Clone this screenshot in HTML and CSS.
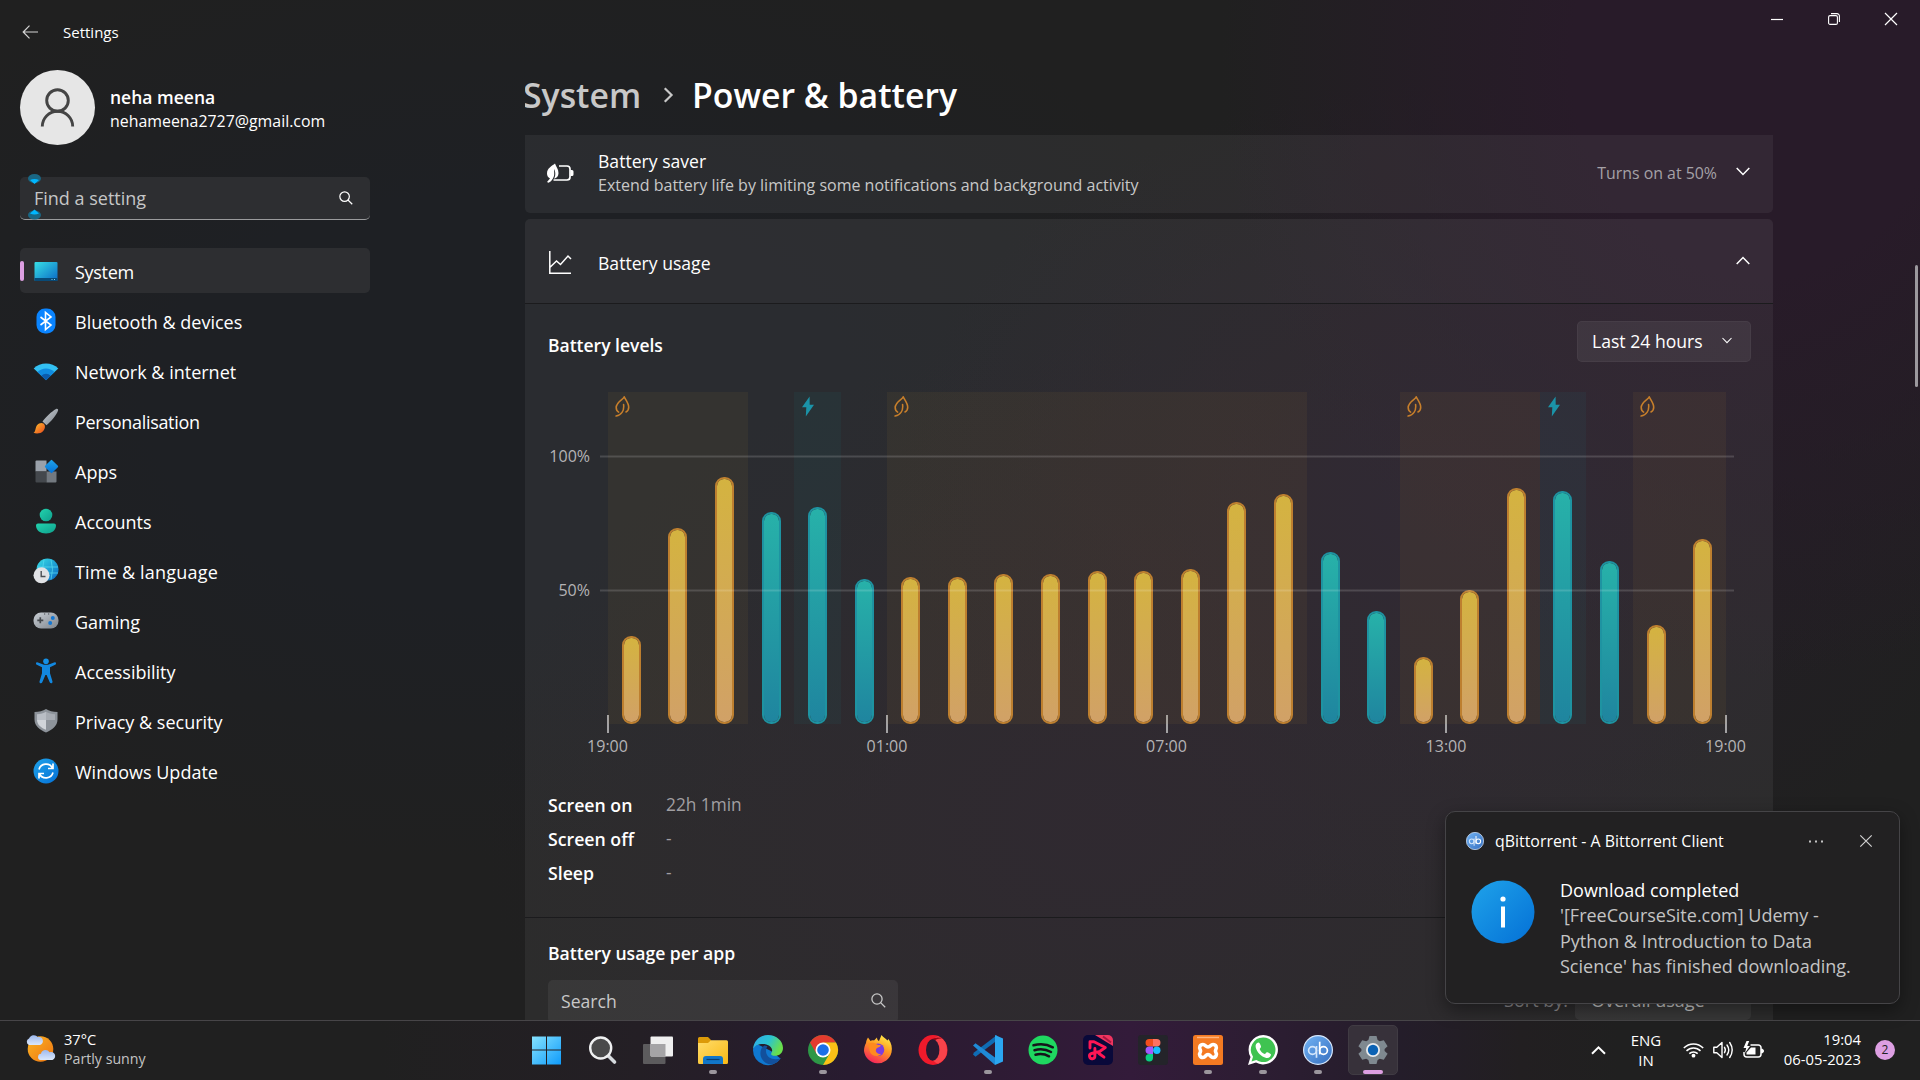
FILE: index.html
```html
<!DOCTYPE html>
<html lang="en">
<head>
<meta charset="utf-8">
<title>Settings</title>
<link rel="stylesheet" href="styles.css">
</head>
<body>
<svg class="defs" width="0" height="0" aria-hidden="true">
  <defs>
    <linearGradient id="gBlue" x1="0" y1="0" x2="1" y2="1"><stop offset="0" stop-color="#1fa3ea"/><stop offset="1" stop-color="#0470d6"/></linearGradient>
    <linearGradient id="gScreen" x1="0" y1="0" x2="1" y2="1"><stop offset="0" stop-color="#37dfe6"/><stop offset="1" stop-color="#0a68c4"/></linearGradient>
    <linearGradient id="gGreen" x1="0" y1="0" x2="1" y2="1"><stop offset="0" stop-color="#22d3ae"/><stop offset="1" stop-color="#0f9f8c"/></linearGradient>
    <linearGradient id="gGrey" x1="0" y1="0" x2="1" y2="1"><stop offset="0" stop-color="#c9ced4"/><stop offset="1" stop-color="#7d848c"/></linearGradient>
    <linearGradient id="gFire" x1="0" y1="0" x2="1" y2="1"><stop offset="0" stop-color="#ffc22e"/><stop offset="1" stop-color="#e8471d"/></linearGradient>
    <linearGradient id="gFox" x1=".8" y1="0" x2=".3" y2="1"><stop offset="0" stop-color="#fff04a"/><stop offset=".45" stop-color="#ff9a22"/><stop offset="1" stop-color="#f5215c"/></linearGradient>
    <linearGradient id="gFolder" x1="0" y1="0" x2="1" y2="1"><stop offset="0" stop-color="#ffdc6a"/><stop offset="1" stop-color="#f9b915"/></linearGradient>
    <linearGradient id="gWin" x1="0" y1="0" x2="1" y2="1"><stop offset="0" stop-color="#86e3ff"/><stop offset="1" stop-color="#0f9bfa"/></linearGradient>
    <linearGradient id="gEdge" x1="0" y1="0" x2="1" y2=".4"><stop offset="0" stop-color="#2fa9e8"/><stop offset=".55" stop-color="#2bc3d2"/><stop offset="1" stop-color="#69e04b"/></linearGradient>
    <linearGradient id="gSun" x1="0" y1="0" x2="1" y2="1"><stop offset="0" stop-color="#fbb524"/><stop offset="1" stop-color="#ee7410"/></linearGradient>
    <linearGradient id="gCloud" x1="0" y1="0" x2="0" y2="1"><stop offset="0" stop-color="#9db9ee"/><stop offset="1" stop-color="#dbe8fb"/></linearGradient>
    <linearGradient id="gQb" x1="0" y1="0" x2="1" y2="1"><stop offset="0" stop-color="#72b4f5"/><stop offset="1" stop-color="#356ebf"/></linearGradient>
    <symbol id="chev-down" viewBox="0 0 14 9"><path d="M.7 1 7 7.5 13.3 1" fill="none" stroke="currentColor" stroke-width="1.5"/></symbol>
    <symbol id="lens" viewBox="0 0 15 15"><circle cx="6" cy="6" r="5.1" fill="none" stroke="currentColor" stroke-width="1.3"/><path d="m9.6 9.6 4.6 4.6" stroke="currentColor" stroke-width="1.3"/></symbol>
    <symbol id="leaf" viewBox="0 0 15 21"><path d="M9.2.9C8.5 3.5 1.2 5.500 1.200 11.500c0 2.200.9 3.700 2.400 4.600M9.200.9c1.200 2.600 4.500 6.100 4.500 10.400 0 2.200-1 3.900-2.700 4.700M8.600 8.600c.7 5.800-2 10.400-7.500 11.400" fill="none" stroke="#c77f2b" stroke-width="1.6" stroke-linecap="round" stroke-linejoin="round"/></symbol>
    <symbol id="bolt" viewBox="0 0 12 21"><path d="M7.600.5 0 11.300h4.300L3.800 20.500 12 8.700H7.700z" fill="#1b93a8"/></symbol>
    <symbol id="qb" viewBox="0 0 30 30"><circle cx="15" cy="15" r="14.400" fill="url(#gQb)" stroke="#d6e6fa" stroke-width="1.200"/><circle cx="9.500" cy="15.500" r="3.900" fill="none" stroke="#d3e6fb" stroke-width="1.700"/><path d="M13.500 11v11.800" stroke="#d3e6fb" stroke-width="1.700"/><circle cx="20.500" cy="15.500" r="3.900" fill="none" stroke="#fff" stroke-width="1.700"/><path d="M16.700 6.700v12.700" stroke="#fff" stroke-width="1.700"/></symbol>
  </defs>
</svg>

<div class="desktop">
  <div class="window">
    <aside class="sidebar">
      <header class="titlebar">
        <svg width="16" height="14" viewBox="0 0 16 14"><path d="M7.500.7 1.200 7l6.300 6.300M1.200 7H16" fill="none" stroke="#d4d4d4" stroke-width="1.200"/></svg>
        <span class="t15">Settings</span>
      </header>
      <div class="profile">
        <svg width="75" height="75" viewBox="0 0 75 75"><circle cx="37.500" cy="37.500" r="37.500" fill="#e6e6e6"/><circle cx="37.500" cy="30.500" r="10.800" fill="none" stroke="#444" stroke-width="2.900"/><path d="M22.300 56.500a15.200 15.200 0 0 1 30.400 0" fill="none" stroke="#444" stroke-width="2.900"/></svg>
        <div>
          <div class="name">neha meena</div>
          <div class="mail">nehameena2727@gmail.com</div>
        </div>
      </div>
      <div class="find">
        <span>Find a setting</span>
        <svg width="14" height="14"><use href="#lens"/></svg>
        <svg class="grip" width="13" height="46" viewBox="0 0 13 46"><ellipse cx="6.500" cy="4.500" rx="6.500" ry="4.500" fill="#1a6784"/><path d="M2 6q4.500-2 9 0L6.500 10z" fill="#00b7ff"/><ellipse cx="6.500" cy="41" rx="6.500" ry="4.500" fill="#1a6784"/><path d="M2 39.500q4.500 2 9 0L6.500 35.500z" fill="#00b7ff"/></svg>
      </div>
      <nav class="nav">
        <a class="item active tight"><svg width="26" height="26" viewBox="0 0 26 26"><rect x="1.500" y="4" width="23" height="19" rx="1" fill="url(#gScreen)"/><path d="M1.500 20h23v2a1 1 0 0 1-1 1h-21a1 1 0 0 1-1-1z" fill="#084a77"/><path d="M18.500 21.500h1m1.500 0h1" stroke="#7fd0f0"/></svg>System</a>
        <a class="item"><svg width="26" height="26" viewBox="0 0 26 26"><rect x="3.500" y=".5" width="19" height="25" rx="8.500" fill="#0a84ff"/><path d="m7.500 9 10.500 8-5.500 4.500v-17L18 9 7.500 17" fill="none" stroke="#fff" stroke-width="1.600"/></svg>Bluetooth &amp; devices</a>
        <a class="item"><svg width="26" height="26" viewBox="0 0 26 26"><path d="M.7 10.500a17.400 17.400 0 0 1 24.600 0L13 22z" fill="#33c0f2"/><path d="M4.500 14a12 12 0 0 1 17 0L13 22.200z" fill="#108be0"/><path d="M8.300 17.700a6.700 6.700 0 0 1 9.400 0L13 22.200z" fill="#0c5bab"/></svg>Network &amp; internet</a>
        <a class="item tight"><svg width="26" height="26" viewBox="0 0 26 26"><path d="M23 1c1.500-.8 2.600.4 2 1.800-1.500 4-7 11-11.500 14.500L9.500 13.500C13 9 18.500 3.500 23 1z" fill="url(#gGrey)"/><path d="M10.500 15.500c2 1.500 2 5-.3 7.500-2.500 2.800-7 3-9.700 1.800 2.500-1.200 1.500-4.800 3.500-7.500 1.800-2.300 4.500-3 6.500-1.800z" fill="url(#gFire)"/></svg>Personalisation</a>
        <a class="item"><svg width="26" height="26" viewBox="0 0 26 26"><path d="M2.500 3.500a1 1 0 0 1 1-1h10v11h-11z" fill="#9aa1aa"/><path d="M2.500 13.500h11v11h-10a1 1 0 0 1-1-1z" fill="#44484d"/><path d="M13.500 13.500h10v10a1 1 0 0 1-1 1h-9z" fill="#737980"/><rect x="13.500" y="3.500" width="10" height="10" rx="1" transform="rotate(45 18.500 8.500)" fill="url(#gBlue)"/></svg>Apps</a>
        <a class="item"><svg width="26" height="26" viewBox="0 0 26 26"><circle cx="13" cy="7" r="6.300" fill="url(#gGreen)"/><path d="M3 17.500a2 2 0 0 1 2-2h16a2 2 0 0 1 2 2c0 5-4.500 8-10 8s-10-3-10-8z" fill="url(#gGreen)"/></svg>Accounts</a>
        <a class="item loose"><svg width="26" height="26" viewBox="0 0 26 26"><circle cx="14.500" cy="11.500" r="11" fill="url(#gScreen)"/><path d="M4.500 9h20.500M4.500 15h20.500M11 1.500q-3 10 0 20M18 1.500q3 10 0 20" fill="none" stroke="#57d8ef" opacity=".75"/><circle cx="8.500" cy="17.300" r="8" fill="#e0e2e5"/><path d="M8.200 13v5.500h4.300" fill="none" stroke="#4b4f55" stroke-width="1.400"/></svg>Time &amp; language</a>
        <a class="item"><svg width="26" height="26" viewBox="0 0 26 26"><rect x=".5" y="4.500" width="25" height="16" rx="7.500" fill="url(#gGrey)"/><path d="M4.300 12.300h6M7.300 9.300v6" stroke="#45494e" stroke-width="1.700"/><path d="M11 6h1.200M15 6h1.200" stroke="#45494e" stroke-width="1.200"/><circle cx="19.800" cy="10" r="2" fill="#1477d3"/><circle cx="17.200" cy="15" r="2" fill="#1477d3"/></svg>Gaming</a>
        <a class="item"><svg width="26" height="26" viewBox="0 0 26 26"><circle cx="13" cy="3.200" r="2.800" fill="#1590e6"/><path d="M4.300 4.300 11 6.800h4l6.700-2.500c1.500-.4 1.800 2 .5 2.500L17 9.200v6l2.500 8.300c.4 2-2.200 2.300-2.800.8L13.600 17h-1.200l-3.100 7.300c-.6 1.500-3.200 1.200-2.800-.8L9 15.200v-6L3.800 6.800c-1.300-.5-1-2.900.5-2.500z" fill="#1288e0"/></svg>Accessibility</a>
        <a class="item"><svg width="26" height="26" viewBox="0 0 26 26"><path d="M13 1c3 2 7 3 11.500 3v7.500c0 6.500-5.500 10.500-11.500 13C7 22 1.500 18 1.500 11.500V4C6 4 10 3 13 1z" fill="#8d939a"/><path d="M13 3.700V12H4V6.300c3.500-.2 6.500-1.200 9-2.600z" fill="#b9bec5"/><path d="M13 3.700c2.500 1.400 5.500 2.400 9 2.600V12h-9z" fill="#a7acb3"/><path d="M13 12v9.800C7.500 19.500 4.100 16.500 4 12z" fill="#d0d4d9"/></svg>Privacy &amp; security</a>
        <a class="item"><svg width="26" height="26" viewBox="0 0 26 26"><circle cx="13" cy="13" r="12.500" fill="url(#gBlue)"/><path d="M6 11.500A7.300 7.300 0 0 1 19.500 10M20 14.500A7.300 7.300 0 0 1 6.500 16M20 5.500V10.500h-5M6 20.500V15.500h5" fill="none" stroke="#fff" stroke-width="1.700"/></svg>Windows Update</a>
      </nav>
    </aside>

    <main class="main">
      <div class="crumbs">
        <span class="parent">System</span>
        <svg width="11" height="16" viewBox="0 0 9 14"><path d="m1.200 1 6 6-6 6" fill="none" stroke="#c8c8c8" stroke-width="1.900"/></svg>
        <span class="current">Power &amp; battery</span>
      </div>
      <section class="card saver">
        <svg class="lead" width="27" height="20" viewBox="0 0 27 20"><path d="M12 3h8a3 3 0 0 1 3 3v8a3 3 0 0 1-3 3H6.500" fill="none" stroke="#fff" stroke-width="1.700"/><path d="M23.500 7h1.500a1.500 1.500 0 0 1 1.500 1.500v3a1.500 1.500 0 0 1-1.500 1.500h-1.500z" fill="#fff"/><path d="M8 .5C5 3 0 5 0 10.500 0 12.500 1 14.500 3 15.500L0 19l1.500.7C4 18.500 6 16.500 7 13 7.500 10.500 7 8 7 6c1.500 2.500 2 6.500 0 9.700 2.500-.5 4.500-2.500 4.500-5.500C11.500 6 9 3.500 8 .5z" fill="#fff"/></svg>
        <div class="grow">
          <div class="label">Battery saver</div>
          <div class="sub">Extend battery life by limiting some notifications and background activity</div>
        </div>
        <span class="state">Turns on at 50%</span>
        <svg class="chev" width="14" height="9"><use href="#chev-down"/></svg>
      </section>
      <section class="card usage">
        <div class="usage-head">
          <svg class="lead" width="27" height="24" viewBox="0 0 27 24"><path d="M2.800 0v22.300H24M2.800 16.500 9.500 10l4 3.500L21 5l3 3" fill="none" stroke="#fff" stroke-width="1.500"/></svg>
          <div class="label grow">Battery usage</div>
          <svg class="chev up" width="14" height="9"><use href="#chev-down"/></svg>
        </div>
        <div class="usage-body">
          <div class="levels-head">
            <h2>Battery levels</h2>
            <div class="select"><span>Last 24 hours</span><svg width="10" height="7"><use href="#chev-down"/></svg></div>
          </div>
          <div class="chart">
            <div class="y-axis"><span>100%</span><span>50%</span></div>
            <div class="plot">
              <div class="zone eco" style="grid-column:1/4"><svg width="15" height="21"><use href="#leaf"/></svg></div>
              <div class="zone charge" style="grid-column:5/6"><svg width="12" height="21"><use href="#bolt"/></svg></div>
              <div class="zone eco" style="grid-column:7/16"><svg width="15" height="21"><use href="#leaf"/></svg></div>
              <div class="zone eco" style="grid-column:18/21"><svg width="15" height="21"><use href="#leaf"/></svg></div>
              <div class="zone charge" style="grid-column:21/22"><svg width="12" height="21"><use href="#bolt"/></svg></div>
              <div class="zone eco" style="grid-column:23/25"><svg width="15" height="21"><use href="#leaf"/></svg></div>
              <div class="bars">
                <i class="y" style="height:33%"></i><i class="y" style="height:73%"></i><i class="y" style="height:92%"></i><i class="t" style="height:79%"></i><i class="t" style="height:81%"></i><i class="t" style="height:54%"></i><i class="y" style="height:55%"></i><i class="y" style="height:55%"></i><i class="y" style="height:56%"></i><i class="y" style="height:56%"></i><i class="y" style="height:57%"></i><i class="y" style="height:57%"></i><i class="y" style="height:58%"></i><i class="y" style="height:83%"></i><i class="y" style="height:86%"></i><i class="t" style="height:64%"></i><i class="t" style="height:42%"></i><i class="y" style="height:25%"></i><i class="y" style="height:50%"></i><i class="y" style="height:88%"></i><i class="t" style="height:87%"></i><i class="t" style="height:61%"></i><i class="y" style="height:37%"></i><i class="y" style="height:69%"></i>
              </div>
              <div class="rule full"></div>
              <div class="rule half"></div>
            </div>
            <div class="x-axis"><span>19:00</span><span>01:00</span><span>07:00</span><span>13:00</span><span>19:00</span></div>
          </div>
          <dl class="stats">
            <dt>Screen on</dt><dd>22h 1min</dd>
            <dt>Screen off</dt><dd>-</dd>
            <dt>Sleep</dt><dd>-</dd>
          </dl>
        </div>
        <div class="per-app">
          <h2 class="per">Battery usage per app</h2>
          <div class="per-tools">
            <div class="app-search"><span>Search</span><svg width="15" height="15"><use href="#lens"/></svg></div>
            <div class="sort"><span>Sort by:</span><div class="sort-select">Overall usage</div></div>
          </div>
        </div>
      </section>
    </main>

    <div class="rail">
      <div class="winbtns">
        <svg width="12" height="12" viewBox="0 0 12 12"><path d="M0 6.500h12" stroke="#fff" stroke-width="1.200"/></svg>
        <svg width="12" height="12" viewBox="0 0 12 12"><rect x=".6" y="2.600" width="8.800" height="8.800" rx="1.500" fill="none" stroke="#fff" stroke-width="1.100"/><path d="M3 .6h6a2.400 2.400 0 0 1 2.400 2.400v6" fill="none" stroke="#fff" stroke-width="1.100"/></svg>
        <svg width="12" height="12" viewBox="0 0 12 12"><path d="m0 0 12 12M12 0 0 12" stroke="#fff" stroke-width="1.200"/></svg>
      </div>
      <div class="scroll"></div>
    </div>
  </div>

  <footer class="taskbar">
    <div class="weather">
      <svg width="32" height="30" viewBox="0 0 32 30"><circle cx="15.500" cy="16" r="12.800" fill="url(#gSun)"/><path d="M4 12a3.500 3.500 0 0 1 0-6.500A5 5 0 0 1 12.500 4 4 4 0 0 1 15 12z" fill="url(#gCloud)"/><path d="M15.500 27a3.200 3.200 0 0 1 .5-6.300 4.600 4.600 0 0 1 8.500-1.500A4 4 0 0 1 27.500 27z" fill="url(#gCloud)"/></svg>
      <div><div class="deg">37°C</div><div class="sky">Partly sunny</div></div>
    </div>
    <div class="apps">
      <span class="app"><svg width="30" height="30" viewBox="0 0 30 30"><path d="M-1 1.500H13V14.500H-1zM14 1.500H28V14.500H14zM-1 15.500H13V29.500H-1zM14 15.500H28V29.500H14z" fill="url(#gWin)"/></svg></span>
      <span class="app"><svg width="30" height="30" viewBox="0 0 30 30"><path d="m20.500 21 6 6" stroke="#d6dade" stroke-width="3.600" stroke-linecap="round"/><circle cx="12.700" cy="13" r="10.500" fill="#4a4a4b" stroke="#eff0f1" stroke-width="2.400"/></svg></span>
      <span class="app"><svg width="30" height="30" viewBox="0 0 30 30"><rect x="0" y="9" width="22.500" height="20" rx="1" fill="#5c5b5d"/><rect x="7.500" y="1.500" width="22.500" height="20" rx="1" fill="#efefef"/><path d="M7.500 9h15v12.500h-14a1 1 0 0 1-1-1z" fill="#a5a4a6"/></svg></span>
      <span class="app run"><svg width="30" height="30" viewBox="0 0 30 30"><path d="M0 3.500A1.500 1.500 0 0 1 1.500 2H10l3 3v5H0z" fill="#dc9a09"/><path d="M0 8h10l3-2.700h15.500A1.500 1.500 0 0 1 30 6.800v20.700A1.500 1.500 0 0 1 28.500 29h-27A1.500 1.500 0 0 1 0 27.500z" fill="url(#gFolder)"/><path d="M5 29v-5a3 3 0 0 1 3-3h14a3 3 0 0 1 3 3v5z" fill="#1176c8"/><path d="M8.500 24.500h13" stroke="#073f73" stroke-width="1.200"/></svg></span>
      <span class="app"><svg width="30" height="30" viewBox="0 0 30 30"><path d="M0 15a15 15 0 0 0 27.500 8.500L18 16 5 9.500Q0 11 0 15z" fill="#0f78d0"/><path d="M0 14C.8 5.500 7.300 0 15 0c8.600 0 15 6 15 13 0 5-3.800 7.800-8 7.800-3.300 0-4.500-1.300-3.600-2.700 2-3 .2-7.500-5-8.700C7.500 8 2 10 0 14z" fill="url(#gEdge)"/><path d="M11.500 10.500c-4 2-5.500 8.500-2.500 13.500 2.300 3.900 6.500 6 10.500 5.300 3.500-.9 7-3.500 8.500-6.300-6 3-15 .5-15-7 0-2.600.9-4 1.500-4.800z" fill="#12509c"/></svg></span>
      <span class="app run"><svg width="30" height="30" viewBox="0 0 30 30"><circle cx="15" cy="15" r="15" fill="#2d9746"/><path d="M2 7.500A15 15 0 0 1 28 7.500L15 8 8.500 18.700z" fill="#e33b2e"/><path d="M28 7.500A15 15 0 0 1 15 30l6.500-11.300L15 7.500z" fill="#fbc116"/><circle cx="15" cy="15" r="7.500" fill="#fff"/><circle cx="15" cy="15" r="5.800" fill="#1b6fe8"/></svg></span>
      <span class="app"><svg width="30" height="30" viewBox="0 0 30 30"><path d="M3 8c.2-2.200 1-4 2-5.500L7.500 6c1-.7 2-.9 3.500-.5L14 2.500c0 2 .8 3 2 3.500L18.500 0c1.500 2 4 3.500 6 5.500l1-1.500c3 4 4 9 3 13.500A14 14 0 0 1 1 16c0-3.500.8-5.500 2-8z" fill="url(#gFox)"/><circle cx="15" cy="14.700" r="6.300" fill="#7b3ee0"/><path d="M5 9c3-2 7-1.500 8.500.2 1.300 1.300 3 .3 4.500 1.300-1 2-3.500 1.500-4.500 3-2 3 1 6 4.500 5.500-3 3.500-9 2.500-11-2z" fill="#ff8a1f"/></svg></span>
      <span class="app"><svg width="30" height="30" viewBox="0 0 30 30"><ellipse cx="15" cy="15" rx="14.500" ry="15" fill="#f01a2b"/><path d="M20 1.200A15 15 0 0 1 20 28.800C15 27 11 21 11 15S15 3 20 1.200z" fill="#f8434a"/><path d="M9.500 8.500C13 2.500 20 1 24.500 3.700 21 3 19 4 17.500 5z" fill="#9c0416"/><ellipse cx="14.700" cy="15" rx="6.700" ry="10.700" fill="#291a31"/></svg></span>
      <span class="app run"><svg width="30" height="30" viewBox="0 0 30 30"><path d="M0 19.500 2.500 21.800 24 5.500V0L1 17.500z" fill="#0f6cb4"/><path d="M2.500 8.200 0 10.500 22 30v-7.500z" fill="#1f8ad6"/><path d="M22 0 30 3.500v23L22 30z" fill="#2ba6f0"/></svg></span>
      <span class="app"><svg width="30" height="30" viewBox="0 0 30 30"><circle cx="15" cy="15" r="14.500" fill="#1fd760"/><path d="M5.500 10.300c6.500-1.800 13.500-1.200 19.300 2M6.500 15.200c5.500-1.500 11.500-1 16.500 1.800M7.500 19.700c4.500-1.200 9.300-.8 13.500 1.600" fill="none" stroke="#15141a" stroke-width="2.500" stroke-linecap="round"/></svg></span>
      <span class="app"><svg width="30" height="30" viewBox="0 0 30 30"><rect width="30" height="30" rx="5" fill="#09093a"/><path d="M12 0h13a5 5 0 0 1 5 5v6z" fill="#ef355f"/><path d="m20 1.500 8 6" stroke="#a81540" stroke-width="2"/><path d="M7 13V6.800h4L22.300 12.500 17 16.300 8.500 18.500a2.700 2.700 0 1 0 3.400 2.600V13.500M16 18.500l5 3.700" fill="none" stroke="#ff1654" stroke-width="2.900" stroke-linejoin="round" stroke-linecap="round"/></svg></span>
      <span class="app"><svg width="30" height="30" viewBox="0 0 30 30"><rect width="30" height="30" rx="3" fill="#24242a"/><path d="M15 4h-3.700a3.700 3.700 0 0 0 0 7.500H15z" fill="#f24e1e"/><path d="M15 4h3.700a3.700 3.700 0 0 1 0 7.500H15z" fill="#ff7262"/><path d="M15 11.500h-3.700a3.700 3.700 0 0 0 0 7.500H15z" fill="#a259ff"/><circle cx="18.800" cy="15.200" r="3.700" fill="#1abcfe"/><path d="M15 19h-3.700a3.700 3.700 0 1 0 3.700 3.700z" fill="#0acf83"/></svg></span>
      <span class="app run"><svg width="30" height="30" viewBox="0 0 30 30"><rect width="30" height="30" rx="2.500" fill="#f47a22"/><path d="M4 1.700h22v1.500H4z" fill="#ffb47c"/><path d="M10 9.500c2.500 0 2.500 2.500 5 2.500s2.500-2.500 5-2.500c3 0 4.300 3 2.700 5.500-.4.700-.4 1.300 0 2 1.600 2.500.3 5.500-2.700 5.500-2.500 0-2.500-3-5-3s-2.500 3-5 3c-3 0-4.300-3-2.700-5.500.4-.7.4-1.300 0-2C5.700 12.500 7 9.500 10 9.500z" fill="none" stroke="#fff" stroke-width="3.600" stroke-linejoin="round"/></svg></span>
      <span class="app run"><svg width="30" height="30" viewBox="0 0 30 30"><path d="M15.300 0A14.700 14.700 0 1 1 8 27.500L0 30l2.500-8A14.700 14.700 0 0 1 15.300 0z" fill="#fff"/><path d="M15.300 2.500A12.300 12.300 0 1 1 8.300 25L3.500 26.500 5 21.700A12.300 12.300 0 0 1 15.300 2.500z" fill="#3fc351"/><path d="M10.500 7.500c-2 .2-3.300 2.300-2.800 4.700 1 5 5.500 9.500 10.500 10.700 2.500.5 4.800-1 4.800-3.300 0-.7-3-2.300-4-2.300s-1.300 1.800-2.300 1.700c-2.300-.9-4-2.600-5-4.800 0-.9 1.500-1.500 1.300-2.600-.2-1.200-1.200-4-2.500-4.100z" fill="#fff"/></svg></span>
      <span class="app run"><svg width="30" height="30"><use href="#qb"/></svg></span>
      <span class="app on"><svg width="30" height="30" viewBox="0 0 30 30"><path d="m11.500 1 7 0 1.100 4 2.200 1.300 4-1.100 3.800 6-3 2.900v1.800l3 2.900-3.800 6-4-1.100-2.200 1.300-1.100 4h-7l-1.100-4-2.200-1.300-4 1.100-3.800-6 3-2.900v-1.800l-3-2.900 3.800-6 4 1.100 2.200-1.300z" fill="#7f8990"/><circle cx="15" cy="15" r="7" fill="#e9ecef"/><circle cx="15" cy="15" r="5.200" fill="#0b62b4"/></svg></span>
    </div>
    <div class="tray">
      <svg class="t-up" width="15" height="9" viewBox="0 0 15 9"><path d="M1 1.200 7.500 7.700 14 1.200" fill="none" stroke="#fff" stroke-width="2"/></svg>
      <div class="lang"><div>ENG</div><div>IN</div></div>
      <div class="quick">
        <svg width="21" height="16" viewBox="0 0 21 16"><path d="M.8 6a13.700 13.700 0 0 1 19.400 0M3.500 8.900a9.900 9.900 0 0 1 14 0M6.300 11.600a6 6 0 0 1 8.400 0" fill="none" stroke="#fff" stroke-width="1.500"/><circle cx="10.500" cy="13.700" r="1.900" fill="#fff"/></svg>
        <svg width="21" height="18" viewBox="0 0 21 18"><path d="M.8 6.300h3L9 1.500v15l-5.200-4.800h-3z" fill="none" stroke="#fff" stroke-width="1.400" stroke-linejoin="round"/><path d="M11.500 6.300q1.700 2.700 0 5.400M14 4q3.500 5 0 10M16.700 1.500q5 7.500 0 15" fill="none" stroke="#fff" stroke-width="1.400" stroke-linecap="round"/></svg>
        <svg width="21" height="18" viewBox="0 0 21 18"><path d="M7.500 4h7.800a2.700 2.700 0 0 1 2.700 2.700v6.600a2.700 2.700 0 0 1-2.700 2.700H3.700A2.700 2.700 0 0 1 1 13.300V11" fill="none" stroke="#fff" stroke-width="1.500"/><path d="M18.500 8a2 2 0 0 1 0 4z" fill="#fff" stroke="#fff"/><path d="M3.500 0 .5 7h2.700L2 12l5-7H4.200l2-5zM8 6.500h4.500v7H3.500v-2z" fill="#fff"/></svg>
      </div>
      <div class="clock"><div>19:04</div><div class="date">06-05-2023</div></div>
      <div class="badge">2</div>
    </div>
  </footer>

  <div class="toast">
    <div class="toast-head">
      <svg width="18" height="18"><use href="#qb"/></svg>
      <span class="toast-app">qBittorrent - A Bittorrent Client</span>
      <svg class="dots" width="14" height="3" viewBox="0 0 14 3"><path d="M0 .5h2v2H0zM6 .5h2v2H6zM12 .5h2v2h-2z" fill="#c4c4c4"/></svg>
      <svg width="12" height="12" viewBox="0 0 12 12"><path d="m.3.300 11.400 11.400M11.700.3.300 11.700" stroke="#d0d0d0" stroke-width="1.200"/></svg>
    </div>
    <div class="toast-body">
      <svg width="64" height="64" viewBox="0 0 64 64"><circle cx="32" cy="32" r="31.500" fill="url(#gBlue)"/><circle cx="32" cy="19" r="2.600" fill="#fff"/><path d="M30 26.500h4v21h-4z" fill="#fff"/></svg>
      <div class="msg"><div class="m0">Download completed</div><div>'[FreeCourseSite.com] Udemy -</div><div>Python &amp; Introduction to Data</div><div>Science' has finished downloading.</div></div>
    </div>
  </div>
</div>
</body>
</html>
```
FILE: styles.css
```css
* { box-sizing: border-box; }
body { margin: 0; background: #202020; color: #fff; font-family: "Open Sans", "Noto Sans", sans-serif; font-size: 18px; line-height: 24px; white-space: nowrap; overflow: hidden; }
svg { flex: none; display: block; overflow: visible; }
.defs { position: absolute; }
.grow { flex: 1; }
.desktop { position: relative; width: 1920px; height: 1080px; display: flex; flex-direction: column; }

.window {
  height: 1020px; display: grid; grid-template-columns: 525px 1248px 147px; overflow: hidden;
  background:
    radial-gradient(ellipse 540px 620px at 1760px 60px, #281b29 35%, transparent 100%),
    radial-gradient(ellipse 560px 420px at 1450px 500px, rgba(38, 29, 42, .9), transparent 100%),
    radial-gradient(ellipse 620px 480px at 1100px 820px, rgba(36, 29, 37, .9), transparent 100%),
    radial-gradient(ellipse 780px 460px at 500px 400px, #1e2024 45%, transparent 100%),
    #202020;
}

.sidebar { padding: 0 0 0 20px; }
.titlebar { height: 66px; display: flex; align-items: center; padding-left: 2px; gap: 25px; }
.titlebar svg { margin-top: -3px; }
.t15 { font-size: 15px; margin-top: -2px; }
.profile { height: 75px; margin-top: 4px; display: flex; align-items: center; gap: 15px; }
.profile > div { padding-top: 2px; }
.name { font-weight: 600; font-size: 17.500px; }
.mail { font-size: 15.900px; }
.find { position: relative; width: 350px; height: 43px; margin-top: 32px; padding: 0 17px 0 14px; display: flex; align-items: center; justify-content: space-between; border-radius: 5px; background: #2d2e31; border-bottom: 1px solid #9a9b9d; color: #c5c6c7; }
.find svg { color: #fff; }
.grip { position: absolute; left: 8px; top: -3px; }
.nav { margin-top: 28px; display: flex; flex-direction: column; gap: 5px; width: 350px; }
.item { position: relative; height: 45px; display: flex; align-items: center; gap: 16.500px; padding: 3px 0 0 12.500px; border-radius: 5px; }
.item svg { margin-top: -3px; }
.tight { letter-spacing: -.300px; }
.loose { letter-spacing: .200px; }
.item.active { background: #2d2e31; }
.item.active::before { content: ""; position: absolute; left: 0; top: 13px; width: 4px; height: 20px; border-radius: 2px; background: #dd9fe2; }

.main { overflow: hidden; }
.crumbs { height: 135px; padding-top: 56px; display: flex; align-items: center; font-size: 33.800px; font-weight: 600; line-height: 79px; }
.parent { color: #c8c8c8; width: 140px; margin-left: -2px; }
.crumbs svg { margin: -2px 18px 0 0; }
.card { background: rgba(255, 255, 255, .055); }
.saver { height: 78px; border-radius: 0 0 5px 5px; display: flex; align-items: center; padding: 0 23px 2px 22px; }
.lead { margin-right: 24px; }
.saver .lead { margin-top: -1px; }
.label { font-size: 17.600px; }
.sub { font-size: 16px; color: #c8c8c8; }
.state { font-size: 15.900px; color: #a5a1a7; margin-right: 19px; }
.saver .chev { margin-top: -3px; }
.usage { margin-top: 6px; border-radius: 5px 5px 0 0; background: none; }
.usage-head { height: 84px; display: flex; align-items: center; padding: 4px 23px 0 22px; background: rgba(255, 255, 255, .065); border-radius: 5px 5px 0 0; }
.up { transform: rotate(180deg); margin-top: -5px; }
.usage-body { height: 614px; border-top: 1px solid #1b1b1d; background: rgba(255, 255, 255, .055); padding: 17px 22px 0 23px; }
.levels-head { display: flex; justify-content: space-between; height: 71px; }
h2 { margin: 0; font-weight: 600; font-size: 17.500px; line-height: 24px; }
.per { font-size: 17.600px; }
.levels-head h2 { margin-top: 12px; }
.select { width: 174px; height: 41px; border-radius: 5px; background: rgba(255, 255, 255, .065); border: 1px solid rgba(255, 255, 255, .04); padding: 0 18px 2px 14px; display: flex; align-items: center; justify-content: space-between; font-size: 17.600px; }

.chart { display: grid; grid-template-columns: 60px 1118px; grid-template-rows: 332px 40px; color: #b4b3b5; font-size: 16px; }
.y-axis { display: flex; flex-direction: column; align-items: flex-end; gap: 110px; padding: 52px 18px 0 0; }
.plot { position: relative; display: grid; grid-template-columns: repeat(24, 1fr); }
.zone { grid-row: 1; padding: 4px 0 0 7px; }
.eco { background: rgba(176, 140, 50, .08); }
.charge { padding-left: 8px; background: rgba(30, 140, 140, .08); }
.bars { grid-row: 1; grid-column: 1 / -1; height: 268px; align-self: end; display: grid; grid-template-columns: repeat(24, 1fr); align-items: end; justify-items: center; }
.bars i { width: 19px; border-radius: 9px; border: 2px solid; }
.bars .y { border-color: #bd7f2f; background: linear-gradient(#d4b340, #d1a167) padding-box; }
.bars .t { border-color: #1e93a1; background: linear-gradient(#27b1a9, #1f859f) padding-box; }
.rule { position: absolute; left: -8px; right: -8px; height: 3px; background: linear-gradient(rgba(255, 255, 255, .07) 33%, rgba(255, 255, 255, .15) 33% 67%, rgba(255, 255, 255, .07) 67%); }
.full { top: 63px; }
.half { top: 197px; }
.x-axis { grid-column: 2; display: flex; justify-content: space-between; margin: -9px -29.500px 0 -30.500px; }
.x-axis span { width: 60px; text-align: center; padding-top: 19px; background: linear-gradient(#a3a2a4, #a3a2a4) center top / 2px 18px no-repeat; }
.stats { margin: 29px 0 0; display: grid; grid-template-columns: 118px 1fr; grid-auto-rows: 34px; line-height: 24px; font-size: 17.700px; }
.stats dt { font-weight: 600; }
.stats dd { margin: 0; color: #a19fa2; font-size: 17.300px; }
.per-app { border-top: 1px solid #1b1b1d; background: rgba(255, 255, 255, .055); height: 110px; padding: 23px 22px 0 23px; }
.per-tools { display: flex; justify-content: space-between; margin-top: 15px; }
.app-search { width: 350px; height: 43px; border-radius: 5px; background: rgba(255, 255, 255, .06); padding: 0 12px 2px 13px; display: flex; align-items: center; justify-content: space-between; color: #c8c8c8; font-size: 17.600px; }
.sort { display: flex; gap: 7px; color: #8d8b8e; line-height: 41px; }
.sort-select { width: 176px; height: 40px; background: rgba(255, 255, 255, .06); border-radius: 5px; padding-left: 16px; color: #c8c8c8; }

.rail { display: flex; flex-direction: column; }
.winbtns { height: 39px; display: flex; align-items: center; gap: 45px; margin-left: -2px; padding-bottom: 2px; }
.scroll { margin: 226px 2px 0 auto; width: 3px; height: 122px; border-radius: 2px; background: #9c999e; }

.taskbar {
  height: 60px; border-top: 1px solid #474548; display: grid; grid-template-columns: 521px 879px 520px;
  background: linear-gradient(90deg, #202020 380px, #241f25 640px, #281b30 850px, #2e1b34 1000px, #331b3a 1130px, #2d1d33 1250px, #241d2a 1400px, #221f21 1520px, #202020 1620px);
}
.weather { display: flex; align-items: center; gap: 7px; padding: 0 0 4px 25px; font-size: 14.600px; line-height: 20px; }
.weather svg { margin-top: -2px; }
.weather > div { padding-top: 1px; }
.sky { color: #c4c4c4; font-size: 14.200px; }
.apps { display: flex; gap: 5px; padding-top: 4px; }
.app { position: relative; width: 50px; height: 50px; margin-left: 2px; margin-right: -2px; border-radius: 5px; display: flex; align-items: center; justify-content: center; }
.run::after, .on::after { content: ""; position: absolute; left: 21px; bottom: 1px; width: 8px; height: 4px; border-radius: 2px; background: #9b969d; }
.on { background: #37313a; border: 1px solid #403b43; }
.on::after { left: 14px; bottom: 0; width: 20px; background: #dd9fe2; }
.tray { display: flex; align-items: center; font-size: 15px; line-height: 20px; padding-left: 191px; }
.t-up { transform: rotate(180deg); }
.lang { width: 30px; margin: -2px 0 0 25px; text-align: center; }
.lang div { margin: 0 -10px; }
.quick { display: flex; align-items: center; gap: 9px; margin: -1px 0 0 22px; }
.clock { margin: -4px 0 0 19px; width: 78px; display: flex; flex-direction: column; align-items: flex-end; font-size: 14.800px; }
.badge { width: 20px; height: 20px; border-radius: 50%; background: #dd9fe2; color: #222; font-size: 12px; text-align: center; margin: -1px 0 0 14px; }

.toast { position: absolute; left: 1445px; top: 811px; width: 455px; height: 193px; border: 1px solid #454447; border-radius: 10px; background: #222122; box-shadow: 0 6px 18px rgba(0, 0, 0, .4); }
.toast-head { height: 58px; display: flex; align-items: center; padding: 0 27px 0 20px; }
.toast-app { margin-left: 11px; flex: 1; font-size: 15.900px; }
.dots { margin-right: 37px; }
.toast-body { display: flex; padding: 8px 0 0 25px; gap: 25px; }
.toast-body svg { margin-top: 2px; }
.msg { line-height: 25.300px; color: #c4c4c4; }
.m0 { color: #fff; }
```
